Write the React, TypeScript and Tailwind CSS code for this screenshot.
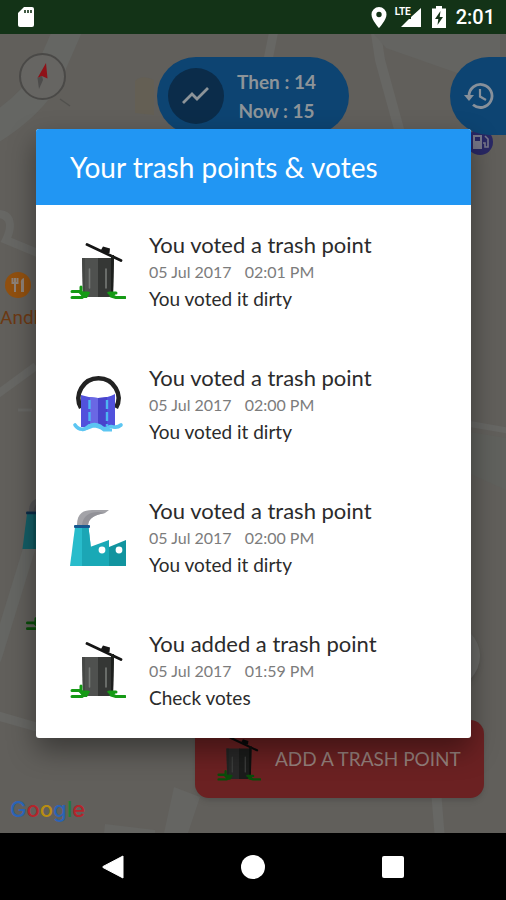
import React from 'react';

type IconProps = { className?: string };

function TrashIcon({ className }: IconProps) {
  return (
    <svg viewBox="0 0 56 57" className={className} aria-hidden="true">
      <path d="M17 1.500 L51 17.500" stroke="#151515" strokeWidth="2.8" strokeLinecap="round" />
      <path d="M31 7 L33 3.500 L40 5.500 L39.500 10 L36 10 Z" fill="#151515" />
      <path d="M12 15 H29 V54 H13 Z" fill="#4f514f" />
      <path d="M12 15 H15 V54 H13 Z" fill="#454745" />
      <path d="M28 15 H44 L43 54 H28 Z" fill="#353735" />
      <path d="M41 12 H44 L43 54 H41 Z" fill="#1d1f1d" />
      <path d="M19.500 26 V45 M36 26 V45" stroke="#777a77" strokeWidth="1.6" strokeLinecap="round" />
      <path d="M9 50 L20 49 L17 55 H13 Z M37 49 L46 49 L44 54 L41 54 Z" fill="#159a15" />
      <path
        d="M2 48.500 H9 L13 50 M2 54.500 H12 L17 51 M11 44 V48 M12 50 H18 M39 50 H44 L41 53 L46 54.500 H55 M43 50 H46"
        fill="none"
        stroke="#159a15"
        strokeWidth="3"
        strokeLinecap="round"
        strokeLinejoin="round"
      />
    </svg>
  );
}

function SewerIcon({ className }: IconProps) {
  return (
    <svg viewBox="0 0 56 57" className={className} aria-hidden="true">
      <path d="M11 32 A20 20 0 1 1 46 32" fill="none" stroke="#222" strokeWidth="4.500" />
      <path d="M11 19 Q20 22 28 22 Q38 22 45 18 V51 H11 Z" fill="#5151dc" />
      <path d="M20 21 L28 22 V50 H20 Z" fill="#6a68e4" />
      <path d="M28 22 L37 21 V50 H28 Z" fill="#4844cc" />
      <path d="M19.500 24 V50 M37 24 V50" stroke="#4db5f2" strokeWidth="2.400" strokeDasharray="9 3" />
      <path d="M5 49 C9 55 15 54 19 50 C23 48 26 48 30 50 C33 53 35 54 39 51 C43 49 45 54 51 49" fill="none" stroke="#5cc6f2" strokeWidth="3.600" strokeLinecap="round" />
      <path d="M12 54 Q18 52 23 50 Q29 50 34 54 L42 54" fill="none" stroke="#5cc6f2" strokeWidth="3" />
    </svg>
  );
}

function FactoryIcon({ className }: IconProps) {
  return (
    <svg viewBox="0 0 56 57" className={className} aria-hidden="true">
      <path d="M7 16 C7 4 14 1 22 1 H39 L35 4 C26 6 19 8 18 16 Z" fill="#a3a3a8" />
      <path d="M12 16 C13 7 19 3 28 3 L35 4 C26 6 19 8 18 16 Z" fill="#929298" />
      <path d="M5 18 H18.500 L23 57 H0 Z" fill="#28bccb" />
      <path d="M12 18 H18.500 L23 57 H12 Z" fill="#1ba6b5" />
      <rect x="4" y="16" width="16" height="3" rx="1" fill="#16578f" />
      <path d="M20 38 L39 31 V57 H20 Z" fill="#19a9b6" />
      <path d="M39 38 L56 31 V57 H39 Z" fill="#11949f" />
      <circle cx="32" cy="41" r="3.400" fill="#fff" />
      <circle cx="49" cy="41" r="3.400" fill="#fff" />
    </svg>
  );
}

function MapCanvas() {
  return (
    <svg viewBox="0 34 506 799" preserveAspectRatio="none" className="absolute inset-0 h-full w-full" aria-hidden="true">
      <rect y="34" width="506" height="799" fill="#615f5b" />
      <g fill="none" stroke="#676764">
        <path d="M72 20 L48 75 Q32 105 -8 130" strokeWidth="28" stroke="#656663" />
        <path d="M276 20 L268 60" strokeWidth="9" />
        <path d="M374 20 L380 60 L402 140" strokeWidth="10" />
        <path d="M-6 214 C16 212 10 232 6 240 L40 254" strokeWidth="8" />
        <path d="M-5 396 L36 366" strokeWidth="8" />
        <path d="M18 410 H32" strokeWidth="3" />
        <path d="M-5 660 L38 520" strokeWidth="12" stroke="#656663" />
        <path d="M-5 715 L40 728" strokeWidth="9" />
        <path d="M470 424 L510 431" strokeWidth="6" />
        <path d="M436 790 L440 840" strokeWidth="10" />
      </g>
      <path d="M374 34 H500 V110 L460 74 L386 48 Z" fill="#646461" />
      <path d="M470 432 L506 438 V490 L470 474 Z" fill="#60615d" />
      <path d="M174 787 L200 797 L188 833 H164 Z M105 824 L155 830 V833 H104 Z" fill="#656562" />
      <path d="M135 81 Q142 74 154 80 V115 L135 113 Z" fill="#645f54" />
      <path d="M60 99 L70 106" stroke="#52514e" strokeWidth="1.500" />
    </svg>
  );
}

function StatusBar() {
  return (
    <header className="flex h-[34px] shrink-0 items-center justify-between bg-[#133317] pl-[17px] pr-[11px] text-white">
      <svg viewBox="0 0 18 22" className="h-[22px] w-[18px]" aria-hidden="true">
        <path d="M7 1 H15 Q17 1 17 3 V19 Q17 21 15 21 H3 Q1 21 1 19 V7 Z" fill="#fff" />
        <path d="M8 4 V7 M11 4 V7 M14 4 V7" stroke="#133317" strokeWidth="1.600" />
      </svg>
      <div className="flex items-center">
        <svg viewBox="0 0 16 21" className="mr-[8px] h-[21px] w-[16px]" aria-hidden="true">
          <path fillRule="evenodd" d="M8 0 A7.500 7.500 0 0 0 .5 7.500 C.5 13 8 21 8 21 S15.500 13 15.500 7.500 A7.500 7.500 0 0 0 8 0 Z M8 4.800 A2.700 2.700 0 1 1 8 10.200 A2.700 2.700 0 0 1 8 4.800 Z" fill="#fff" />
        </svg>
        <div className="relative mr-[10px] h-[21px] w-[27px]">
          <svg viewBox="0 0 27 21" className="h-full w-full" aria-hidden="true">
            <path d="M26 1 V20 H6 L14 12 H16 V10 Z" fill="#fff" />
          </svg>
          <span className="absolute -top-px left-0 font-['Roboto',sans-serif] text-[10px] font-bold leading-[12px]">LTE</span>
        </div>
        <svg viewBox="0 0 14 22" className="mr-[10px] h-[22px] w-[14px]" aria-hidden="true">
          <path d="M4 0 H10 V2.500 H14 V22 H0 V2.500 H4 Z" fill="#fff" />
          <path d="M8.500 5 L3 13 H6.300 L5.500 19 L11 11 H7.700 Z" fill="#133317" />
        </svg>
        <span className="font-['Roboto',sans-serif] text-[20px] font-medium leading-[24px]">2:01</span>
      </div>
    </header>
  );
}

function MapControls() {
  return (
    <div className="relative flex items-start pt-[23px]">
      <div className="flex flex-1">
        <button type="button" aria-label="Compass" className="-mt-1 ml-[19px] h-[47px] w-[47px]">
          <svg viewBox="0 0 47 47" className="h-full w-full" aria-hidden="true">
            <circle cx="23.500" cy="23.500" r="22.500" fill="#666562" stroke="#4a4947" strokeWidth="2" />
            <path d="M27 10 L18.500 25 L23 23 L28.500 25.500 Z" fill="#8f1218" />
            <path d="M18.500 25 L23 23 L24 27 L20 36 Z" fill="#4d4c4b" />
          </svg>
        </button>
      </div>
      <button type="button" className="flex h-[78px] w-[192px] items-center rounded-full bg-[#0d4472] pl-[11px] text-[#8d9499]">
        <span className="flex h-[56px] w-[56px] items-center justify-center rounded-full bg-[#0b2c4a]">
          <svg viewBox="0 0 28 20" className="h-[20px] w-[28px]" aria-hidden="true">
            <path d="M1 17 L10 8 L15 13 L26 2" fill="none" stroke="currentColor" strokeWidth="2.800" />
          </svg>
        </span>
        <span className="flex-1 pl-[8px] pr-[28px] text-center text-[19px] font-bold leading-[29px]">
          <span className="block">Then : 14</span>
          <span className="block">Now : 15</span>
        </span>
      </button>
      <div className="flex flex-1 justify-end">
        <button type="button" aria-label="History" className="flex h-[78px] w-[56px] items-center rounded-l-full bg-[#0d4472] pl-[14px]">
          <svg viewBox="0 0 30 28" className="h-[28px] w-[30px]" aria-hidden="true">
            <path d="M5 14 A11.500 11.500 0 1 1 9 22.700" fill="none" stroke="#87909a" strokeWidth="2.800" />
            <path d="M0 13 H10 L5 19 Z" fill="#87909a" />
            <path d="M16 7 V14.500 L22 18" fill="none" stroke="#87909a" strokeWidth="2.200" />
          </svg>
        </button>
      </div>
    </div>
  );
}

function MapPins() {
  return (
    <>
      <div className="absolute left-0 top-[237px]">
        <svg viewBox="0 0 28 28" className="ml-1 h-[28px] w-[28px]" aria-hidden="true">
          <circle cx="14" cy="14" r="13" fill="#91500f" />
          <path d="M8.500 7 V12 H13.500 V7 M11 7 V21" fill="none" stroke="#8d8177" strokeWidth="2" />
          <path d="M17 21 V13 Q16 8 20 7 V21 Z" fill="#8d8177" />
        </svg>
        <span className="mt-[7px] block font-['Roboto',sans-serif] text-[19px] leading-[24px] text-[#6c3913]">Andl</span>
      </div>
      <svg viewBox="0 0 28 28" className="absolute right-[12px] top-[94px] h-[28px] w-[28px]" aria-hidden="true">
        <circle cx="14" cy="14" r="13" fill="#292865" />
        <path fillRule="evenodd" d="M7 7 H16 V21 H7 Z M9 9 V13 H14 V9 Z" fill="#77778a" />
        <path d="M17 15 H19 V19 H22 V11 L19 8" fill="none" stroke="#77778a" strokeWidth="1.600" />
      </svg>
      <FactoryIcon className="absolute left-[22px] top-[463px] h-[52px] w-[52px] brightness-50" />
      <TrashIcon className="absolute left-[25px] top-[543px] h-[54px] w-[54px] brightness-50" />
      <div className="absolute right-[26px] top-[590px] h-[64px] w-[64px] rounded-full bg-[#6a6a68] shadow-md" />
    </>
  );
}

const entries = [
  { title: 'You voted a trash point', date: '05 Jul 2017', time: '02:01 PM', note: 'You voted it dirty', icon: TrashIcon },
  { title: 'You voted a trash point', date: '05 Jul 2017', time: '02:00 PM', note: 'You voted it dirty', icon: SewerIcon },
  { title: 'You voted a trash point', date: '05 Jul 2017', time: '02:00 PM', note: 'You voted it dirty', icon: FactoryIcon },
  { title: 'You added a trash point', date: '05 Jul 2017', time: '01:59 PM', note: 'Check votes', icon: TrashIcon },
];

function VotesDialog() {
  return (
    <div className="absolute inset-0 flex items-center justify-center pl-9 pr-[35px]">
      <section
        role="dialog"
        aria-labelledby="votes-title"
        className="w-full overflow-hidden rounded-[3px] bg-white shadow-[0_12px_28px_rgba(0,0,0,0.4)]"
      >
        <h1 id="votes-title" className="bg-[#2196f3] py-5 pl-[34px] text-[28px] leading-[36px] text-white">
          Your trash points &amp; votes
        </h1>
        <ul className="pb-px">
          {entries.map((entry, i) => {
            const Icon = entry.icon;
            return (
              <li key={i} className="flex items-center gap-[23px] py-[26px] pl-[34px]">
                <Icon className="h-[57px] w-[56px]" />
                <div className="leading-[27px]">
                  <h2 className="text-[22px] leading-[27px] text-[#2b2b2b]">{entry.title}</h2>
                  <p className="flex gap-[13px] text-[16px] leading-[27px] text-[#7c7c7c]">
                    <span>{entry.date}</span>
                    <span>{entry.time}</span>
                  </p>
                  <p className="text-[19px] leading-[27px] text-[#2b2b2b]">{entry.note}</p>
                </div>
              </li>
            );
          })}
        </ul>
      </section>
    </div>
  );
}

function GoogleLogo() {
  return (
    <span className="font-['Inter',sans-serif] text-[22px] font-medium leading-[28px]">
      <span className="text-[#2b63b5]">G</span>
      <span className="text-[#b3252b]">o</span>
      <span className="text-[#b98d12]">o</span>
      <span className="text-[#2b63b5]">g</span>
      <span className="text-[#1f7f3c]">l</span>
      <span className="text-[#b3252b]">e</span>
    </span>
  );
}

function NavBar() {
  return (
    <nav className="flex h-[67px] shrink-0 items-center justify-center gap-[116px] bg-black">
      <button type="button" aria-label="Back">
        <svg viewBox="0 0 24 24" className="h-6 w-6" aria-hidden="true">
          <path d="M22 1 V23 L2 12.500 Q1 12 2 11.500 Z" fill="#fff" stroke="#fff" strokeLinejoin="round" />
        </svg>
      </button>
      <button type="button" aria-label="Home" className="h-6 w-6 rounded-full bg-white" />
      <button type="button" aria-label="Recent apps" className="flex h-6 w-6 items-center justify-center">
        <span className="h-[22px] w-[22px] rounded-[2px] bg-white" />
      </button>
    </nav>
  );
}

export default function App() {
  return (
    <div className="flex min-h-screen flex-col font-['Lato',sans-serif]">
      <StatusBar />
      <main className="relative flex flex-1 flex-col justify-between overflow-hidden">
        <MapCanvas />
        <MapPins />
        <MapControls />
        <div className="relative flex items-end justify-between pb-[10px] pl-[10px] pr-[22px]">
          <GoogleLogo />
          <button
            type="button"
            className="mb-[25px] flex h-[78px] w-[289px] items-center rounded-[14px] bg-[#6b2122] pl-[22px] text-[19px] text-[#95807c] shadow-md"
          >
            <TrashIcon className="mr-[14px] h-[46px] w-[44px] brightness-50" />
            ADD A TRASH POINT
          </button>
        </div>
        <VotesDialog />
      </main>
      <NavBar />
    </div>
  );
}
